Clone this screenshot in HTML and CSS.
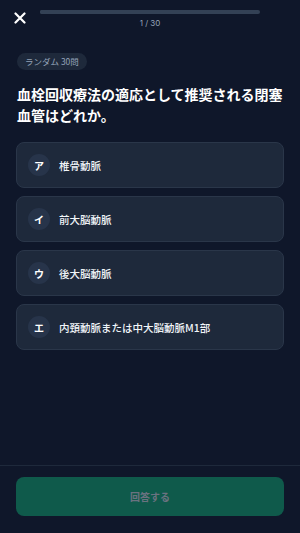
FILE: index.html
```html
<!DOCTYPE html>
<html lang="ja">
<head>
    <meta charset="UTF-8">
    <title>Quiz</title>
    <meta name="viewport" content="width=device-width, initial-scale=1.0">
    <link rel="stylesheet" href="styles.css">
</head>
<body>
    <div class="quiz-screen">
        <div class="quiz-header">
            <button class="close-btn" aria-label="close">
                <svg width="12" height="12" viewBox="0 0 12 12">
                    <path d="M1.5 1.5 L10.5 10.5 M10.5 1.5 L1.5 10.5" stroke="#fff" stroke-width="2.2" stroke-linecap="round"/>
                </svg>
            </button>
            <div class="progress">
                <div class="progress-track"><div class="progress-fill" style="width: 3.3%"></div></div>
                <div class="progress-text">1 / 30</div>
            </div>
        </div>

        <div class="quiz-body">
            <div class="mode-badge">ランダム 30問</div>
            <div class="question">血栓回収療法の適応として推奨される閉塞血管はどれか。</div>

            <div class="options">
                <div class="option"><span class="option-key">ア</span><span class="option-text">椎骨動脈</span></div>
                <div class="option"><span class="option-key">イ</span><span class="option-text">前大脳動脈</span></div>
                <div class="option"><span class="option-key">ウ</span><span class="option-text">後大脳動脈</span></div>
                <div class="option"><span class="option-key">エ</span><span class="option-text">内頚動脈または中大脳動脈M1部</span></div>
            </div>
        </div>

        <div class="quiz-footer">
            <button class="answer-btn" disabled>回答する</button>
        </div>
    </div>
</body>
</html>
```

FILE: styles.css
```css
* {
    box-sizing: border-box;
}

body {
    margin: 0;
    background: #0f172a;
    font-family: "Noto Sans CJK JP", "Noto Sans", sans-serif;
    color: #fff;
}

.quiz-screen {
    height: 533px;
    display: flex;
    flex-direction: column;
}

.quiz-header {
    display: flex;
    align-items: flex-start;
    padding: 10px 40px 0 14px;
    height: 44px;
}

.close-btn {
    background: none;
    border: none;
    padding: 0;
    width: 12px;
    height: 12px;
    margin-top: 2px;
    margin-right: 14px;
    display: flex;
}

.progress {
    flex: 1;
    display: flex;
    flex-direction: column;
    align-items: center;
}

.progress-track {
    width: 100%;
    height: 4px;
    background: #334155;
    border-radius: 2px;
    overflow: hidden;
}

.progress-fill {
    height: 100%;
    background: #334155;
}

.progress-text {
    margin-top: 3px;
    font-size: 8px;
    line-height: 12px;
    color: #94a3b8;
    font-family: "Inter", "Noto Sans CJK JP", sans-serif;
}

.quiz-body {
    flex: 1;
    padding: 9px 16px 0;
}

.mode-badge {
    width: fit-content;
    background: #1e293b;
    color: #94a3b8;
    font-size: 8.5px;
    line-height: 17px;
    padding: 0 8px;
    border-radius: 9px;
    margin-left: 1px;
}

.question {
    margin-top: 14px;
    font-size: 14px;
    font-weight: 700;
    line-height: 21px;
    padding-left: 1px;
}

.options {
    margin-top: 16px;
    display: flex;
    flex-direction: column;
    gap: 8px;
}

.option {
    display: flex;
    align-items: center;
    height: 46px;
    padding: 0 11px;
    background: #1e293b;
    border: 1px solid #2a3649;
    border-radius: 8px;
}

.option-key {
    width: 22px;
    height: 22px;
    border-radius: 50%;
    background: #27344a;
    display: flex;
    align-items: center;
    justify-content: center;
    font-size: 10px;
    font-weight: 700;
}

.option-text {
    margin-left: 9px;
    font-size: 10.5px;
    font-weight: 500;
    color: #f1f5f9;
}

.quiz-footer {
    border-top: 1px solid #1e293b;
    padding: 11px 16px 17px;
}

.answer-btn {
    width: 100%;
    height: 39px;
    background: #0f5a4b;
    border: none;
    border-radius: 8px;
    color: #6b7280;
    font-family: inherit;
    font-size: 10px;
    font-weight: 700;
}
```
